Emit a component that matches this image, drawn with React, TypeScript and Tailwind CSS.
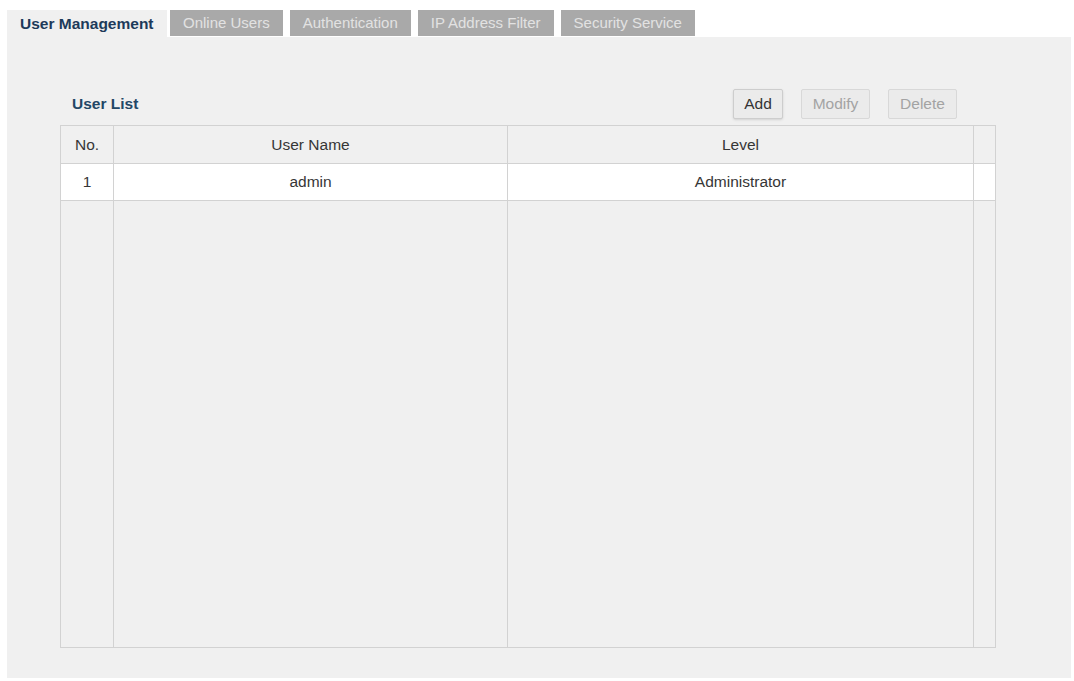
import React from 'react';

const tabs = ['Online Users', 'Authentication', 'IP Address Filter', 'Security Service'];

const users = [{ no: 1, name: 'admin', level: 'Administrator' }];

export default function App() {
  return (
    <div
      className="w-[1074px] h-[681px] bg-white pt-[10px] pl-[7px] pr-[3px] text-[15.5px] text-[#363636]"
      style={{ fontFamily: '"Liberation Sans", Arial, sans-serif' }}
    >
      {/* Tabs */}
      <div className="flex h-[27px]">
        <div className="flex items-center px-[13px] w-[160px] bg-[#f0f0f0] font-bold text-[#1d3a5a] mr-[3px]">
          User Management
        </div>
        <div className="flex gap-[7px]">
          {tabs.map((t) => (
            <div
              key={t}
              className="flex items-center px-[13px] bg-[#a9a9a9] text-[#e2e2e2] text-[15px] h-[26px]"
            >
              {t}
            </div>
          ))}
        </div>
      </div>

      {/* Panel */}
      <div className="h-[641px] bg-[#f0f0f0] pl-[53px] pr-[75px] pt-[52px] pb-[30px] flex flex-col">
        <div className="flex h-[30px] items-center justify-between">
          <span className="pl-[12px] font-bold text-[#234766]">User List</span>
          <div className="flex gap-[18px] mr-[39px] h-full">
            <button className="w-[50px] h-full bg-[#ebebeb] border border-[#cdcdcd] rounded-[2px] text-[#333] shadow-sm">
              Add
            </button>
            <button className="w-[69px] h-full bg-[#ebebeb] border border-[#d8d8d8] rounded-[2px] text-[#a3a3a3]">
              Modify
            </button>
            <button className="w-[69px] h-full bg-[#ebebeb] border border-[#d8d8d8] rounded-[2px] text-[#a3a3a3]">
              Delete
            </button>
          </div>
        </div>

        {/* User table */}
        <div className="mt-[6px] flex-1 border border-[#d2d2d2] grid grid-cols-[53px_394px_466px_1fr] grid-rows-[38px_37px_1fr]">
          <div className="border-r border-b border-[#d2d2d2] flex items-center justify-center">No.</div>
          <div className="border-r border-b border-[#d2d2d2] flex items-center justify-center">User Name</div>
          <div className="border-r border-b border-[#d2d2d2] flex items-center justify-center">Level</div>
          <div className="border-b border-[#d2d2d2]"></div>

          {users.map((u) => (
            <React.Fragment key={u.no}>
              <div className="bg-white border-r border-b border-[#d2d2d2] flex items-center justify-center">{u.no}</div>
              <div className="bg-white border-r border-b border-[#d2d2d2] flex items-center justify-center">{u.name}</div>
              <div className="bg-white border-r border-b border-[#d2d2d2] flex items-center justify-center">{u.level}</div>
              <div className="bg-white border-b border-[#d2d2d2]"></div>
            </React.Fragment>
          ))}

          <div className="border-r border-[#d2d2d2]"></div>
          <div className="border-r border-[#d2d2d2]"></div>
          <div className="border-r border-[#d2d2d2]"></div>
          <div></div>
        </div>
      </div>
    </div>
  );
}
